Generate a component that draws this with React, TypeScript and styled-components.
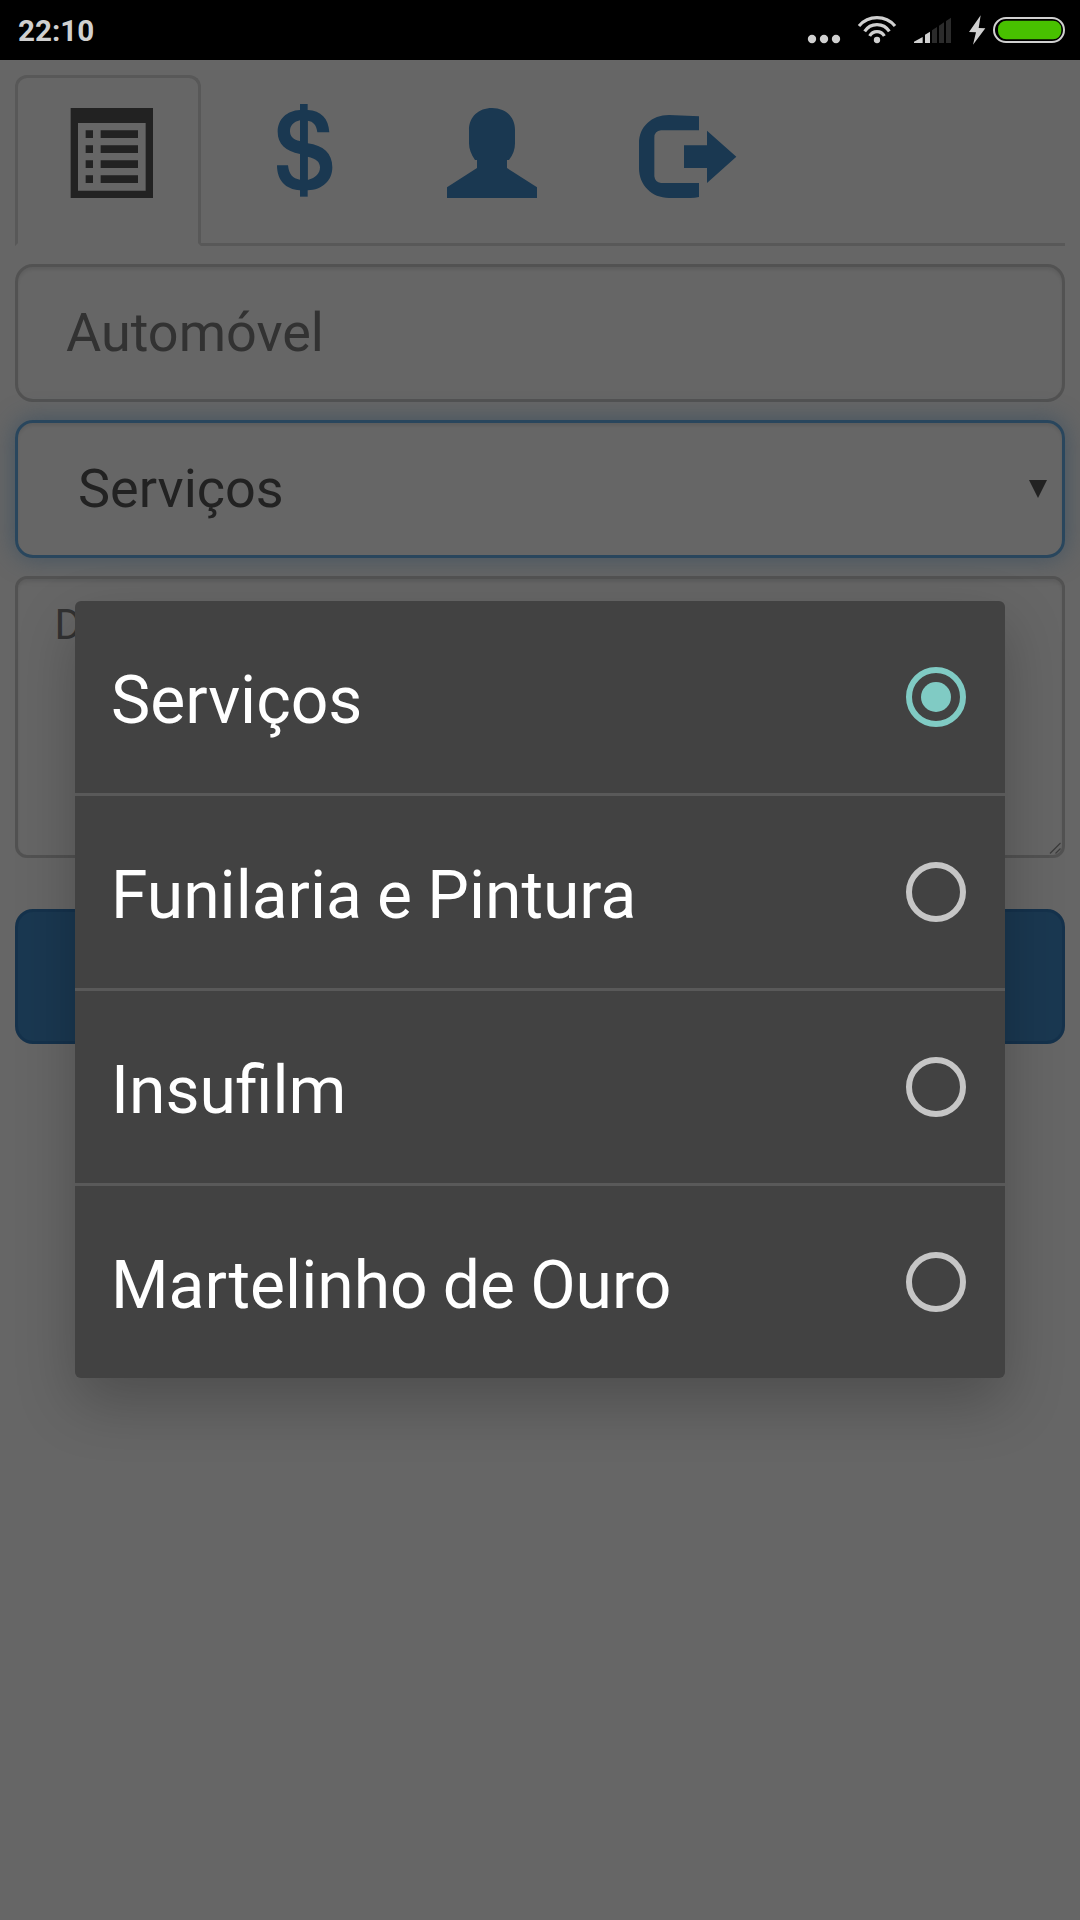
import React from "react";
import styled, { createGlobalStyle, css } from "styled-components";

const GlobalStyle = createGlobalStyle`
  *, *::before, *::after { box-sizing: border-box; }
  body {
    margin: 0;
    background: #666;
    font-family: Roboto, "Noto Sans", sans-serif;
  }
  svg { display: block; flex: none; overflow: visible; }
`;

const Screen = styled.div`
  position: relative;
  display: flex;
  flex-direction: column;
  width: 1080px;
  height: 1920px;
  overflow: hidden;
  background: #666;
`;

const StatusBar = styled.header`
  display: flex;
  align-items: center;
  justify-content: space-between;
  flex: none;
  height: 60px;
  padding: 0 15px 0 18px;
  background: #000;
  color: #d0d0d0;
`;

const Clock = styled.time`
  padding-top: 2px;
  font-size: 29.6px;
  line-height: 60px;
  font-weight: 700;
`;

const StatusIcons = styled.div`
  display: flex;
  height: 60px;
`;

const Page = styled.main`
  display: flex;
  flex-direction: column;
  padding: 15px 15px 0;
`;

const Tabs = styled.nav`
  display: flex;
  gap: 6px;
  height: 171px;
  margin-bottom: 18px;
  border-bottom: 3px solid #585858;
`;

const Tab = styled.a<{ $active?: boolean }>`
  width: 186px;
  height: 171px;
  padding: 30px 45px;
  border: 3px solid transparent;
  border-radius: 12px 12px 0 0;
  color: #1a3851;
  ${(p) =>
    p.$active &&
    css`
      color: #222;
      background: #666;
      border-color: #585858;
      border-bottom-color: #666;
    `}
`;

const field = css`
  display: flex;
  border: 3px solid #525252;
  box-shadow: inset 0 3px 3px rgba(0, 0, 0, 0.075);
  margin-bottom: 18px;
`;

const TextField = styled.div`
  ${field}
  align-items: center;
  height: 138px;
  padding: 0 48px 2px;
  border-radius: 18px;
  font-size: 54px;
  color: #323232;
`;

const SelectField = styled.div`
  ${field}
  align-items: center;
  justify-content: space-between;
  height: 138px;
  padding: 0 15px 0 60px;
  border-color: #29465d;
  border-radius: 18px;
  box-shadow: inset 0 3px 3px rgba(0, 0, 0, 0.075), 0 0 24px rgba(41, 70, 93, 0.6);
  font-size: 54px;
  color: #222;
`;

const SelectValue = styled.span`
  padding-bottom: 2px;
`;

const TextArea = styled.div`
  ${field}
  justify-content: space-between;
  height: 282px;
  margin-bottom: 51px;
  padding: 16px 0 0 36.5px;
  border-radius: 12px;
  font-size: 42px;
  line-height: 60px;
  color: #323232;
`;

const Resizer = styled.svg`
  align-self: flex-end;
`;

const SubmitButton = styled.button`
  height: 135px;
  border: 3px solid #15324c;
  border-radius: 18px;
  background: #1a3851;
`;

const Dialog = styled.div`
  position: absolute;
  top: 601px;
  left: 75px;
  width: 930px;
  border-radius: 6px;
  background: #424242;
  box-shadow: 0 24px 60px rgba(0, 0, 0, 0.24);
`;

const Option = styled.div`
  display: flex;
  align-items: center;
  justify-content: space-between;
  height: 192px;
  padding: 0 39px 0 36px;
  box-sizing: content-box;
  color: #fff;
  font-size: 66px;
  & + & {
    border-top: 3px solid #595959;
  }
`;

const OptionLabel = styled.span`
  padding-top: 8px;
  line-height: 78px;
  word-spacing: -1.2px;
`;

const Radio = styled.span<{ $on: boolean }>`
  display: grid;
  place-items: center;
  width: 60px;
  height: 60px;
  border: 6px solid ${(p) => (p.$on ? "#80cbc4" : "#c6c6c6")};
  border-radius: 50%;
  &::after {
    content: "";
    width: 30px;
    height: 30px;
    border-radius: 50%;
    background: ${(p) => (p.$on ? "#80cbc4" : "transparent")};
  }
`;

const ListIcon = () => (
  <svg width="90" height="90" viewBox="0 0 270 270" fill="currentColor">
    <path fillRule="evenodd" d="M23 0H270V270H23Z M45 45V248H248V45Z" />
    {[67, 112, 157, 202].map((y) => (
      <path key={y} d={`M68 ${y}h22v23h-22z M113 ${y}h112v23h-112z`} />
    ))}
  </svg>
);

const DollarIcon = () => (
  <svg width="90" height="90" viewBox="45 84 270 270" fill="currentColor">
    <path d="M180 72H203V350H180Z" />
    <path
      fillRule="evenodd"
      d="M268 157H232C230 136 220 124 203 122V190C250 196 277 220 277 262C277 302 247 330 203 331H180C136 329 111 300 111 256H144C147 283 158 296 180 299V222C137 212 113 193 113 155C113 118 140 92 180 90H203C243 92 266 115 268 157Z M180 121C160 125 150 138 150 153C150 170 160 179 180 183Z M203 230V300C228 294 240 280 240 262C240 245 228 236 203 230Z"
    />
  </svg>
);

const UserIcon = () => (
  <svg width="90" height="90" viewBox="621 84 270 270" fill="currentColor">
    <path d="M621 354V322L711 264V240H705C693 222 687 208 687 190V150C687 110 716 84 756 84C796 84 825 110 825 150V190C825 208 819 225 807 240H801V264L891 322V354Z" />
  </svg>
);

const LogOutIcon = () => (
  <svg width="90" height="90" viewBox="237 84 270 270" fill="currentColor">
    <path d="M417 109V151H303Q283 153 283 173V289Q285 307 303 309H417V351Q405 354 390 354H327C275 354 237 315 237 265V190C237 140 275 105 327 105Z" />
    <path d="M372 196H441V152L529 230L441 309V264H372Z" />
  </svg>
);

const DotsIcon = () => (
  <svg width="42" height="60" viewBox="81 0 126 180" fill="currentColor">
    <circle cx="96" cy="117" r="12.5" />
    <circle cx="132" cy="117" r="12.5" />
    <circle cx="168" cy="117" r="12.5" />
  </svg>
);

const WifiIcon = () => (
  <svg width="56" height="60" viewBox="207 0 168 180" fill="none" stroke="currentColor" strokeWidth="9.5">
    <path d="M237 78A71 71 0 0 1 345 78" />
    <path d="M254 94A44 44 0 0 1 328 94" />
    <path d="M269 108A25 25 0 0 1 313 108" />
    <circle cx="291" cy="120" r="9.5" fill="currentColor" stroke="none" />
  </svg>
);

const SignalIcon = () => (
  <svg width="55" height="60" viewBox="375 0 165 180" fill="currentColor">
    <path d="M402 129V125L428 111V129Z M435 129V104L450 95V129Z" />
    <path fill="#2b2b2b" d="M456 129V91L471 81V129Z M477 129V77L492 67V129Z M498 129V63L513 53V129Z" />
  </svg>
);

const BoltIcon = () => (
  <svg width="29" height="60" viewBox="540 0 87 180" fill="currentColor">
    <path d="M602 46L567 96L588 97L579 134L616 85L596 84Z" />
  </svg>
);

const BatteryIcon = () => (
  <svg width="76" height="60" viewBox="627 0 228 180">
    <rect x="642" y="54" width="210" height="72" rx="36" fill="none" stroke="currentColor" strokeWidth="6" />
    <rect x="654" y="62" width="190" height="56" rx="25" fill="#48c100" />
  </svg>
);

const options = ["Serviços", "Funilaria e Pintura", "Insufilm", "Martelinho de Ouro"];

export default function App() {
  return (
    <>
      <GlobalStyle />
      <Screen>
        <StatusBar>
          <Clock>22:10</Clock>
          <StatusIcons>
            <DotsIcon />
            <WifiIcon />
            <SignalIcon />
            <BoltIcon />
            <BatteryIcon />
          </StatusIcons>
        </StatusBar>
        <Page>
          <Tabs>
            <Tab $active><ListIcon /></Tab>
            <Tab><DollarIcon /></Tab>
            <Tab><UserIcon /></Tab>
            <Tab><LogOutIcon /></Tab>
          </Tabs>
          <TextField>Automóvel</TextField>
          <SelectField>
            <SelectValue>Serviços</SelectValue>
            <svg width="18" height="18" viewBox="0 0 18 18" fill="currentColor">
              <path d="M0 0H18L9 18Z" />
            </svg>
          </SelectField>
          <TextArea>
            <span>D</span>
            <Resizer width="15" height="15" viewBox="0 0 15 15" stroke="#3c3c3c" strokeWidth="1.2">
              <path d="M3 13.5L13.5 3M8.5 13.5L13.5 8.5" />
            </Resizer>
          </TextArea>
          <SubmitButton />
        </Page>
        <Dialog>
          {options.map((label, i) => (
            <Option key={label}>
              <OptionLabel>{label}</OptionLabel>
              <Radio $on={i === 0} />
            </Option>
          ))}
        </Dialog>
      </Screen>
    </>
  );
}
